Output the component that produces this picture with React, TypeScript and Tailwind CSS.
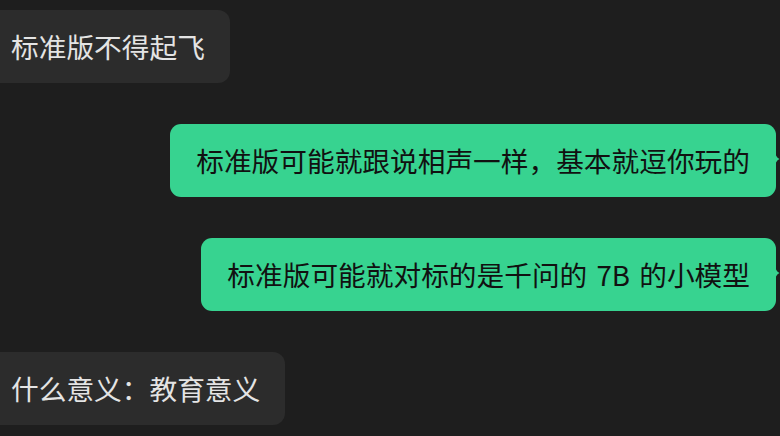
const FONT = '"Noto Sans CJK SC", "Noto Sans", sans-serif';

function Tail() {
  return (
    <svg
      className="absolute right-[-4px] top-[27px]"
      width="5"
      height="16"
      viewBox="0 0 5 16"
      fill="#37d390"
    >
      <path d="M0 0 C0.5 4 1.5 6.5 4.5 8 C1.5 9.5 0.5 12 0 16 Z" />
    </svg>
  );
}

function Incoming({ text }: { text: string }) {
  return (
    <div className="flex justify-start">
      <div className="flex h-[73px] items-center rounded-r-[12px] bg-[#2c2c2c] pl-[11px] pr-[25px] text-[27.7px] text-[#e4e4e4]">
        {text}
      </div>
    </div>
  );
}

function Outgoing({ text, wide }: { text: string; wide?: boolean }) {
  return (
    <div className="flex justify-end pr-[4px]">
      <div
        className={
          wide
            ? "relative flex h-[73px] items-center rounded-[11px] bg-[#37d390] px-[26px] text-[27.7px] text-[#111] [word-spacing:3px]"
            : "relative flex h-[73px] items-center rounded-[11px] bg-[#37d390] px-[26px] text-[27.7px] text-[#111]"
        }
      >
        {text}
        <Tail />
      </div>
    </div>
  );
}

export default function App() {
  return (
    <div
      className="flex h-[436px] w-[780px] flex-col gap-[41px] overflow-hidden bg-[#1e1e1e] pt-[10px] leading-none"
      style={{ fontFamily: FONT }}
    >
      <Incoming text="标准版不得起飞" />
      <Outgoing text="标准版可能就跟说相声一样，基本就逗你玩的" />
      <Outgoing text="标准版可能就对标的是千问的 7B 的小模型" wide />
      <Incoming text="什么意义：教育意义" />
    </div>
  );
}
